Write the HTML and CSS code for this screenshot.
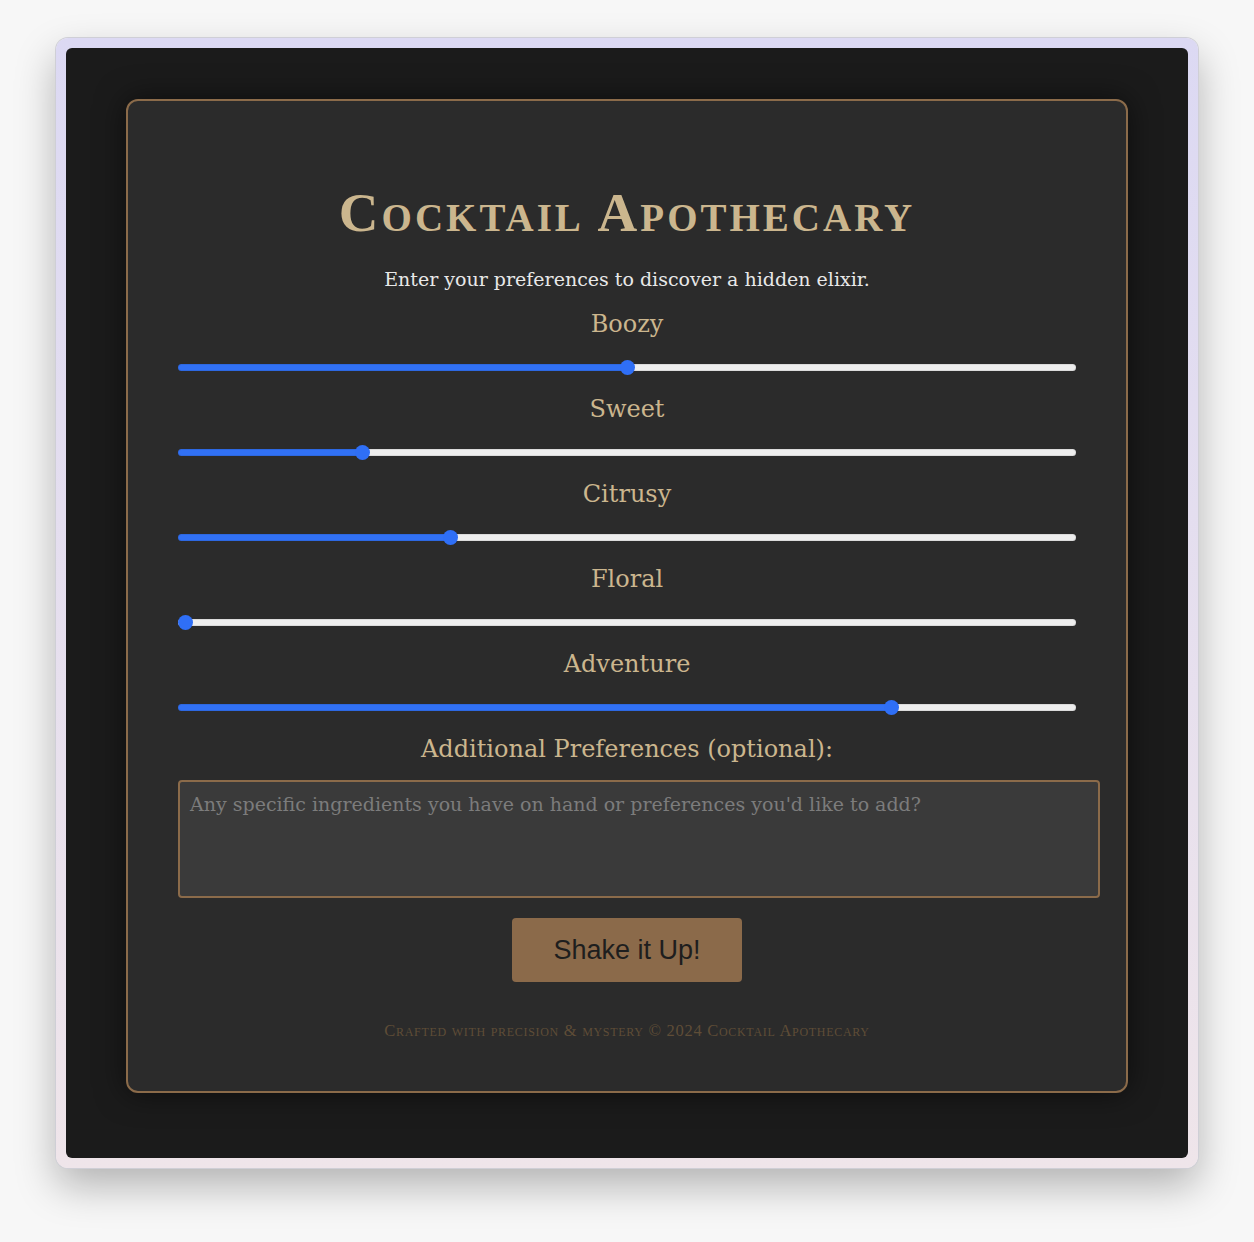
FILE: index.html
```html
<!DOCTYPE html>
<html lang="en">
  <head>
    <meta charset="UTF-8" />
    <meta name="viewport" content="width=device-width, initial-scale=1.0" />
    <title>Cocktail Apothecary</title>
    <link rel="stylesheet" href="styles.css">
  </head>
  <body>
    <div class="ventana">
      <main class="pantalla">
        <section class="tarjeta">
          <h1>Cocktail Apothecary</h1>
          <p class="intro">Enter your preferences to discover a hidden elixir.</p>

          <!-- Cada preferencia: etiqueta + slider de 0 a 10 -->
          <div class="campo">
            <label for="boozy">Boozy</label>
            <input type="range" id="boozy" min="0" max="10" value="5" style="--fill: 50%">
          </div>
          <div class="campo">
            <label for="sweet">Sweet</label>
            <input type="range" id="sweet" min="0" max="10" value="2" style="--fill: 20%">
          </div>
          <div class="campo">
            <label for="citrusy">Citrusy</label>
            <input type="range" id="citrusy" min="0" max="10" value="3" style="--fill: 30%">
          </div>
          <div class="campo">
            <label for="floral">Floral</label>
            <input type="range" id="floral" min="0" max="10" value="0" style="--fill: 0%">
          </div>
          <div class="campo">
            <label for="adventure">Adventure</label>
            <input type="range" id="adventure" min="0" max="10" value="8" style="--fill: 80%">
          </div>

          <div class="campo extra">
            <label for="notas">Additional Preferences (optional):</label>
            <textarea id="notas" placeholder="Any specific ingredients you have on hand or preferences you'd like to add?"></textarea>
          </div>

          <div class="acciones">
            <button type="button">Shake it Up!</button>
          </div>

          <footer>Crafted with precision &amp; mystery &copy; 2024 Cocktail Apothecary</footer>
        </section>
      </main>
    </div>
  </body>
</html>
```

FILE: styles.css
```css
/* Marco de la ventana: borde lila con sombra alrededor */
body {
  margin: 0;
  padding: 38px 0 74px 56px;
  background-color: #f7f7f7;
}
.ventana {
  width: 1122px;
  height: 1110px;
  padding: 10px;
  border-radius: 12px;
  background: linear-gradient(#dcd9f3, #efe5ea);
  box-shadow: 0 0 0 1px #cfcfd6, 0 18px 40px rgba(0, 0, 0, 0.28);
}
.pantalla {
  height: 100%;
  box-sizing: border-box;
  padding: 51px 60px 0;
  background-color: #1b1b1b;
  border-radius: 6px;
}

/* La tarjeta central */
.tarjeta {
  border: 2px solid #8b6b4a;
  border-radius: 12px;
  padding: 50px;
  background-color: #2b2b2b;
  box-shadow: 0 0 30px rgba(0, 0, 0, 0.55);
  font-family: "DejaVu Serif", "Liberation Serif", serif;
  text-align: center;
}
.tarjeta h1 {
  font-family: "Liberation Serif", serif;
  font-variant: small-caps;
  font-weight: bold;
  font-size: 55px;
  line-height: 56px;
  letter-spacing: 3px;
  color: #cbb68e;
  margin: 34px 0 25px;
}
.intro {
  margin: 0 0 17px;
  font-size: 19px;
  line-height: 26px;
  color: #e8e8e8;
}

.campo label {
  display: block;
  font-size: 24px;
  line-height: 30px;
  color: #cbb68e;
  margin-bottom: 20px;
}

/* Sliders: pista clara y parte rellena en azul según --fill */
.campo input[type="range"] {
  -webkit-appearance: none;
  appearance: none;
  display: block;
  width: 100%;
  height: 16px;
  margin: 0 0 19px;
  background: transparent;
}
.campo input[type="range"]::-webkit-slider-runnable-track {
  height: 7px;
  border-radius: 4px;
  background: linear-gradient(to right, #3171f5 var(--fill), #eeeeee var(--fill));
  box-shadow: inset 0 0 0 1px rgba(0, 0, 0, 0.08);
}
.campo input[type="range"]::-webkit-slider-thumb {
  -webkit-appearance: none;
  width: 15px;
  height: 15px;
  margin-top: -4px;
  border-radius: 50%;
  background-color: #2f6ff6;
  border: none;
}

.extra label {
  margin-bottom: 16px;
}
.extra textarea {
  display: block;
  width: 100%;
  height: 94px;
  padding: 10px;
  margin: 0;
  border: 2px solid #8b6b4a;
  border-radius: 4px;
  background-color: #3a3a3a;
  color: #e8e8e8;
  font-family: "DejaVu Serif", "Liberation Serif", serif;
  font-size: 19px;
  line-height: 24px;
  resize: none;
}
.extra textarea::placeholder {
  color: #7c7c7c;
}

.acciones {
  margin-top: 20px;
}
.acciones button {
  width: 230px;
  height: 64px;
  border: none;
  border-radius: 4px;
  background-color: #8b6a4a;
  color: #1e1e1e;
  font-family: "Liberation Sans", Arial, sans-serif;
  font-size: 27px;
}

.tarjeta footer {
  margin-top: 39px;
  font-family: "Liberation Serif", serif;
  font-variant: small-caps;
  font-size: 16.5px;
  line-height: 20px;
  letter-spacing: 0.7px;
  color: #5f4d37;
}
```
